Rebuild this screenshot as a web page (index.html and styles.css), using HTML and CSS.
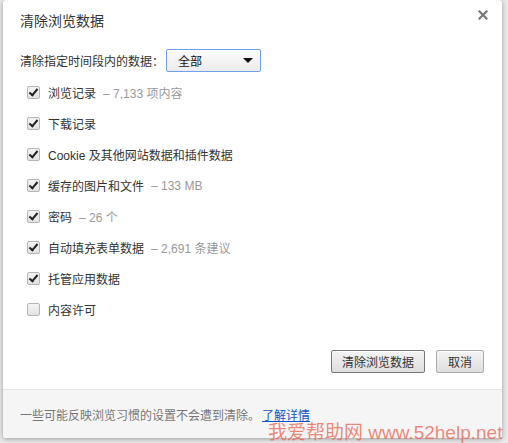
FILE: index.html
```html
<!DOCTYPE html>
<html lang="zh-CN">
<head>
<meta charset="utf-8">
<link rel="stylesheet" href="styles.css">
</head>
<body>
<div class="dialog">
  <div class="main">
    <div class="head">
      <div class="title">清除浏览数据</div>
      <div class="close">
        <svg width="10" height="10" viewBox="0 0 10 10"><path d="M1.5 1.5 L8.5 8.5 M8.5 1.5 L1.5 8.5" stroke="#777" stroke-width="2.2" stroke-linecap="square"/></svg>
      </div>
    </div>
    <div class="period">
      <span class="period-label">清除指定时间段内的数据：</span>
      <div class="select"><span>全部</span><span class="arrow"></span></div>
    </div>
    <ul class="list">
      <li class="item"><span class="cb on"></span><span class="lbl">浏览记录</span><span class="cnt">– 7,133 项内容</span></li>
      <li class="item"><span class="cb on"></span><span class="lbl">下载记录</span></li>
      <li class="item"><span class="cb on"></span><span class="lbl">Cookie 及其他网站数据和插件数据</span></li>
      <li class="item"><span class="cb on"></span><span class="lbl">缓存的图片和文件</span><span class="cnt">– 133 MB</span></li>
      <li class="item"><span class="cb on"></span><span class="lbl">密码</span><span class="cnt">– 26 个</span></li>
      <li class="item"><span class="cb on"></span><span class="lbl">自动填充表单数据</span><span class="cnt">– 2,691 条建议</span></li>
      <li class="item"><span class="cb on"></span><span class="lbl">托管应用数据</span></li>
      <li class="item"><span class="cb"></span><span class="lbl">内容许可</span></li>
    </ul>
    <div class="actions">
      <button class="btn primary">清除浏览数据</button>
      <button class="btn cancel">取消</button>
    </div>
  </div>
  <div class="footer">
    <span>一些可能反映浏览习惯的设置不会遭到清除。</span><a class="link" href="#">了解详情</a>
  </div>
</div>
<div class="watermark">我爱帮助网 www.52help.net</div>
</body>
</html>
```

FILE: styles.css
```css
html, body {
  margin: 0;
  padding: 0;
}
body {
  width: 508px;
  height: 443px;
  overflow: hidden;
  background: #e9e9e9;
  font-family: "Liberation Sans", "Noto Sans CJK SC", sans-serif;
  font-size: 12px;
  color: #333;
  position: relative;
}
.dialog {
  margin-left: 3px;
  width: 499px;
  height: 438px;
  background: #fff;
  border-radius: 3px;
  box-shadow: 0 1px 5px rgba(0,0,0,0.35);
  display: flex;
  flex-direction: column;
  overflow: hidden;
}
.main {
  flex: 1;
  padding: 0 18px 0 17px;
  display: flex;
  flex-direction: column;
}
.head {
  display: flex;
  justify-content: space-between;
  align-items: flex-start;
  padding-top: 11px;
}
.title {
  font-size: 14px;
  line-height: 20px;
  color: #333;
}
.close {
  margin-top: -1px;
  margin-right: -4px;
  width: 10px;
  height: 10px;
}
.close svg { display: block; }
.period {
  margin-top: 18px;
  display: flex;
  align-items: center;
  height: 23px;
}
.period-label {
  width: 146px;
  color: #333;
}
.select {
  width: 95px;
  height: 23px;
  box-sizing: border-box;
  border: 1px solid #6fa0ee;
  border-radius: 2px;
  background: linear-gradient(#fbfbfb, #ececec);
  box-shadow: inset 0 1px 0 #fff;
  display: flex;
  align-items: center;
  justify-content: space-between;
  padding: 0 7px 0 11px;
  color: #111;
}
.arrow {
  width: 0;
  height: 0;
  border-left: 5px solid transparent;
  border-right: 5px solid transparent;
  border-top: 5px solid #111;
}
.list {
  list-style: none;
  margin: 5px 0 0;
  padding: 0 0 0 7px;
}
.item {
  height: 31px;
  display: flex;
  align-items: center;
}
.cb {
  width: 11px;
  height: 11px;
  border: 1px solid #b5b5b5;
  border-radius: 2px;
  background: linear-gradient(#f4f4f4, #e2e2e2);
  margin-right: 8px;
  position: relative;
}
.cb.on::after {
  content: "";
  position: absolute;
  left: 3px;
  top: 0px;
  width: 3px;
  height: 7px;
  border-right: 2.4px solid #222;
  border-bottom: 2.4px solid #222;
  transform: rotate(40deg);
}
.lbl { color: #333; }
.cnt {
  color: #999;
  margin-left: 7px;
}
.actions {
  margin-top: 25px;
  display: flex;
  justify-content: flex-end;
  gap: 11px;
}
.btn {
  height: 23px;
  border: 1px solid #aaa;
  border-radius: 2px;
  background: linear-gradient(#f3f3f3, #dedede);
  box-shadow: inset 0 1px 0 #fff;
  font-family: "Liberation Sans", "Noto Sans CJK SC", sans-serif;
  font-size: 12px;
  color: #333;
  padding: 0;
  margin: 0;
}
.btn.primary {
  width: 94px;
  border-color: #777;
}
.btn.cancel {
  width: 48px;
}
.footer {
  height: 48px;
  border-top: 1px solid #e3e3e3;
  background: #f5f5f5;
  display: flex;
  align-items: center;
  padding: 0 17px;
  color: #777;
}
.link {
  color: #1155cc;
  text-decoration: underline;
  margin-left: 2px;
}
.watermark {
  position: absolute;
  left: 268px;
  top: 422px;
  font-size: 19px;
  line-height: 21px;
  color: rgba(230, 100, 80, 0.75);
  white-space: nowrap;
  font-family: "Liberation Sans", "Noto Sans CJK SC", sans-serif;
}
```
